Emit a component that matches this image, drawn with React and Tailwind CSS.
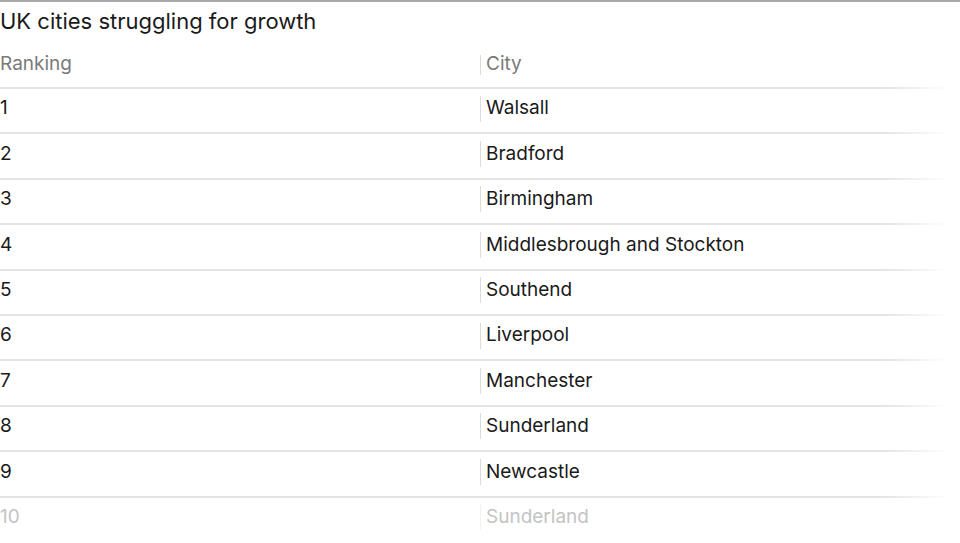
const cities = [
  'Walsall',
  'Bradford',
  'Birmingham',
  'Middlesbrough and Stockton',
  'Southend',
  'Liverpool',
  'Manchester',
  'Sunderland',
  'Newcastle',
  'Sunderland',
];

const font = { fontFamily: 'Inter, "Liberation Sans", sans-serif' };

const Rule = () => (
  <div className="h-[2px] w-full bg-[linear-gradient(to_right,#e4e4e4_0%,#e4e4e4_92%,rgba(228,228,228,0)_99%)]" />
);

export default function App() {
  return (
    <div className="w-[960px] h-[543px] overflow-hidden bg-white text-[#1a1a1a]" style={font}>
      <div className="h-[2px] w-full bg-[#a8a8a8]" />

      {/* Title */}
      <div className="h-[38px] flex items-center text-[22px] leading-none">
        UK cities struggling for growth
      </div>

      {/* Header */}
      <div className="h-[47px] flex items-center pt-[2px] text-[19px] text-[#7a7a7a]">
        <div className="w-[480px]">Ranking</div>
        <div className="flex items-center">
          <div className="w-px h-[20px] bg-[#dcdcdc]" />
          <div className="pl-[5px]">City</div>
        </div>
      </div>

      {/* Rows */}
      {cities.map((city, i) => {
        const last = i === cities.length - 1;
        return (
          <div key={i}>
            <Rule />
            <div
              className={`h-[43.4px] flex items-center pb-[4px] text-[19px] ${
                last ? 'text-[#c4c4c4]' : 'text-[#1a1a1a]'
              }`}
            >
              <div className="w-[480px]">{i + 1}</div>
              <div className="flex items-center">
                <div className={`w-px h-[26px] ${last ? 'bg-[#f2f2f2]' : 'bg-[#dcdcdc]'}`} />
                <div className="pl-[5px]">{city}</div>
              </div>
            </div>
          </div>
        );
      })}
    </div>
  );
}
